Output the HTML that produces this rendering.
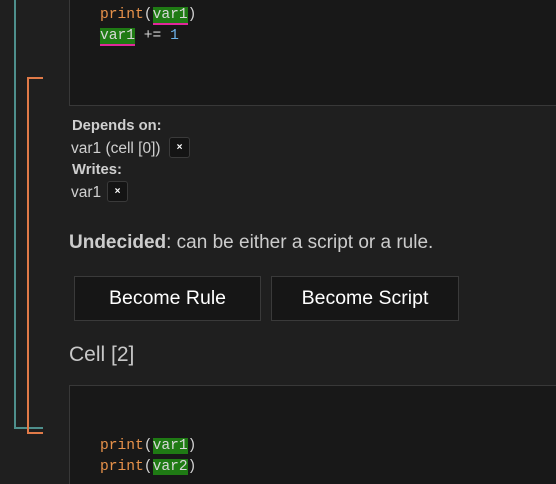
<!DOCTYPE html>
<html style="overflow:hidden;height:484px"><head><style>
body{margin:0;width:556px;height:484px;background:#1f1f1f;position:relative;overflow:hidden;font-family:"Liberation Sans",sans-serif;}
.abs{position:absolute}
.code{position:absolute;left:69px;background:#181818;border:1px solid #383838;width:500px}
.mono{font-family:"Liberation Mono",monospace;font-size:14.6px;line-height:21px;color:#d4d4d4;white-space:pre}
.k{color:#e8924a}
.v{background:#1f7a14;color:#d8d8d8}
.u{border-bottom:2px solid #e0289a}
.n{color:#6cb2e8}
.lbl{font-size:15.5px;color:#cfcfcf}
.b{font-weight:bold;font-size:14.8px}
.x{position:absolute;width:19px;height:19px;background:#141414;border:1px solid #3a3a3a;border-radius:3px;color:#fff;font-size:10px;line-height:19px;text-align:center;font-weight:bold}
.btn{position:absolute;top:276px;height:43px;background:#161616;border:1px solid #3a3a3a;color:#fff;font-size:19.5px;line-height:43px;text-align:center}
</style></head><body>
<div class="code" style="top:-1px;height:105px"></div>
<div class="abs mono" style="left:100px;top:5px"><span class="k">print</span>(<span class="v u">var1</span>)
<span class="v u">var1</span> += <span class="n">1</span></div>

<div class="abs" style="left:14px;top:0;width:2px;height:429px;background:#4e8f8c"></div>
<div class="abs" style="left:14px;top:427px;width:29px;height:2px;background:#4e8f8c"></div>
<div class="abs" style="left:27px;top:77px;width:2px;height:357px;background:#e07a48"></div>
<div class="abs" style="left:27px;top:77px;width:16px;height:2px;background:#e07a48"></div>
<div class="abs" style="left:27px;top:432px;width:16px;height:2px;background:#e07a48"></div>

<div class="abs lbl b" style="left:72px;top:118px">Depends on:</div>
<div class="abs lbl" style="left:71px;top:140px">var1 (cell [0])</div>
<div class="x" style="left:169px;top:137px">×</div>
<div class="abs lbl b" style="left:72px;top:162px">Writes:</div>
<div class="abs lbl" style="left:71px;top:184px">var1</div>
<div class="x" style="left:107px;top:181px">×</div>

<div class="abs" style="left:69px;top:232px;font-size:19px;color:#cccccc"><b>Undecided</b>: can be either a script or a rule.</div>
<div class="btn" style="left:74px;width:185px">Become Rule</div>
<div class="btn" style="left:271px;width:186px">Become Script</div>
<div class="abs" style="left:69px;top:343px;font-size:21px;color:#c8c8c8">Cell [2]</div>

<div class="code" style="top:385px;height:98px;border-bottom:none"></div>
<div class="abs mono" style="left:100px;top:436px"><span class="k">print</span>(<span class="v">var1</span>)
<span class="k">print</span>(<span class="v">var2</span>)</div>
</body></html>
